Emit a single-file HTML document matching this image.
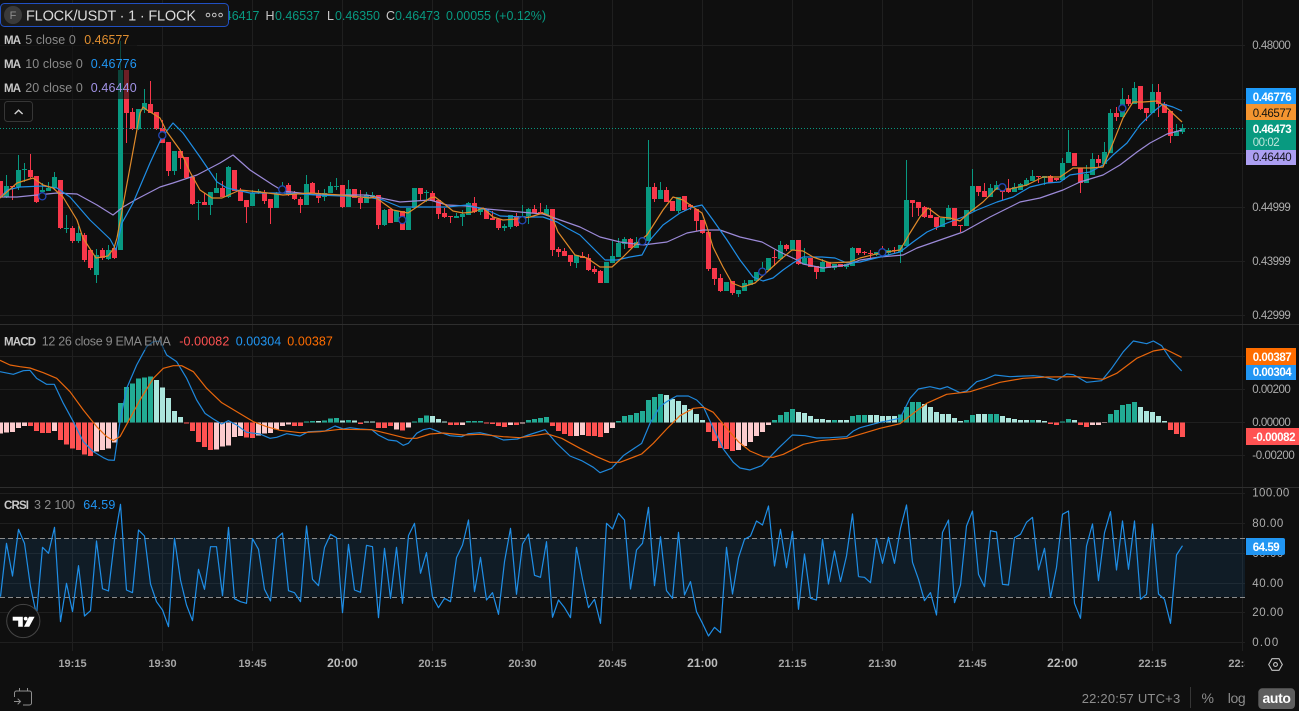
<!DOCTYPE html>
<html><head><meta charset="utf-8"><title>FLOCK/USDT</title>
<style>
html,body{margin:0;padding:0;background:#0f0f0f;width:1299px;height:711px;overflow:hidden}
svg{display:block;font-family:"Liberation Sans",sans-serif}
.p{font-size:11.5px;fill:#adadad}
.t{font-size:11px;font-weight:700;fill:#a6a6a6;text-anchor:middle}
.h{font-size:12px;font-weight:700;fill:#bcbcbc;text-anchor:middle}
.g{fill:#089981;font-size:12.5px}
.m{fill:#c8c8c8;font-size:12.5px}
.b{font-size:11.5px;font-weight:700;fill:#c8c8c8}
.s{font-size:12.5px;fill:#8a8a8a}
</style></head><body>
<svg width="1299" height="711" viewBox="0 0 1299 711" xmlns="http://www.w3.org/2000/svg">
<defs><clipPath id="tc"><rect x="0" y="650" width="1245" height="30"/></clipPath></defs>
<rect width="1299" height="711" fill="#0f0f0f"/>
<!-- grid -->
<path stroke="#1f1f1f" stroke-width="1" fill="none" d="M72.5 0V651M162.5 0V651M252.5 0V651M342.5 0V651M432.5 0V651M522.5 0V651M612.5 0V651M702.5 0V651M792.5 0V651M882.5 0V651M972.5 0V651M1062.5 0V651M1152.5 0V651M1242.5 0V651
M0 45.5H1245M0 99.5H1245M0 153.5H1245M0 207.5H1245M0 261.5H1245M0 315.5H1245
M0 356.5H1245M0 389.5H1245M0 422.5H1245M0 455.5H1245
M0 493.5H1245M0 523.5H1245M0 553.5H1245M0 583.5H1245M0 612.5H1245M0 642.5H1245"/>
<path stroke="#2e2e2e" stroke-width="1" d="M0 324.5H1299M0 487.5H1299"/>
<!-- candles -->
<g fill="none" shape-rendering="crispEdges">
<path stroke="#089981" stroke-width="1" d="M6.5 175V198M18.5 155V190M24.5 163V182M42.5 183V192M48.5 182V191M54.5 172V190M66.5 215V233M78.5 226V243M96.5 249V283M108.5 245V260M120.5 41V250M138.5 109V130M144.5 89V113M174.5 151V175M198.5 200V220M210.5 192V215M216.5 173V193M228.5 166V198M252.5 190V206M258.5 189V194M276.5 192V208M282.5 182V190M306.5 175V205M324.5 189V201M330.5 182V193M336.5 178V190M348.5 180V207M366.5 192V203M372.5 192V197M384.5 209V226M396.5 211V222M408.5 208V230M414.5 188V208M426.5 190V202
M456.5 213V218M462.5 210V226M468.5 202V215M480.5 208V215M504.5 224V231M510.5 215V229M522.5 205V217M528.5 208V224M546.5 205V215M576.5 255V268M606.5 262V283M612.5 241V263M618.5 238V257M624.5 237V249M636.5 237V248M642.5 237V245M648.5 140V241M660.5 182V199M678.5 197V213M726.5 282V291M738.5 290V297M744.5 280V291M750.5 280V285M756.5 272V281M762.5 262V275M768.5 258V270M780.5 241V259M792.5 240V250M804.5 248V264M822.5 259V272M834.5 264V270M846.5 264V269M852.5 247V266
M876.5 252V256M888.5 248V255M900.5 245V263M906.5 160V246M942.5 218V227M948.5 205V220M966.5 210V226M972.5 169V211M990.5 184V197M996.5 181V190M1014.5 183V192M1020.5 183V190M1026.5 178V186M1032.5 170V181M1044.5 176V185M1062.5 158V180M1068.5 130V163M1086.5 165V183M1092.5 153V175M1104.5 142V164M1110.5 109V153M1122.5 88V117M1134.5 82V104M1152.5 84V113M1176.5 124V136M1182.5 124V134"/>
<path stroke="#089981" stroke-width="5" d="M6.5 186V197M18.5 170V187M24.5 169V170M42.5 190V192M48.5 188V191M54.5 177V188M66.5 228V229M78.5 233V241M96.5 255V275M108.5 250V259M120.5 70V250M138.5 109V129M144.5 103V110M174.5 151V171M198.5 202V203M210.5 192V205M216.5 188V193M228.5 167V197M252.5 193V206M258.5 191V192M276.5 194V208M282.5 189V190M306.5 184V205M324.5 193V197M330.5 186V193M336.5 186V187M348.5 189V207M366.5 195V203M372.5 195V197M384.5 210V225M396.5 211V222M408.5 208V230M414.5 188V208M426.5 192V193
M456.5 216V218M462.5 214V217M468.5 203V215M480.5 208V212M504.5 226V228M510.5 215V227M522.5 216V217M528.5 209V216M546.5 209V215M576.5 255V263M606.5 262V283M612.5 256V263M618.5 243V257M624.5 239V244M636.5 242V248M642.5 241V243M648.5 187V241M660.5 190V199M678.5 197V211M726.5 282V291M738.5 290V294M744.5 283V291M750.5 280V285M756.5 272V281M762.5 268V273M768.5 258V270M780.5 245V259M792.5 240V250M804.5 258V264M822.5 262V272M834.5 264V268M846.5 264V267M852.5 248V266
M876.5 252V255M888.5 250V253M900.5 245V252M906.5 200V246M942.5 218V227M948.5 208V220M966.5 210V226M972.5 186V211M990.5 188V197M996.5 185V190M1014.5 187V192M1020.5 184V190M1026.5 180V185M1032.5 176V181M1044.5 176V178M1062.5 163V180M1068.5 152V163M1086.5 174V183M1092.5 159V175M1104.5 152V164M1110.5 113V153M1122.5 99V117M1134.5 88V104M1152.5 92V113M1176.5 131V136M1182.5 128V132"/>
<path stroke="#f7374a" stroke-width="1" d="M.5 181V197M12.5 186V200M30.5 154V178M36.5 176V203M60.5 180V229M72.5 226V243M84.5 233V262M90.5 250V270M102.5 248V260M114.5 246V259M126.5 70V143M132.5 108V130M150.5 81V113M156.5 112V130M162.5 120V143M168.5 142V176M180.5 151V169M186.5 157V178M192.5 177V205M204.5 193V205M222.5 181V197M234.5 170V191M240.5 188V201M246.5 200V223M264.5 190V204M270.5 199V224M288.5 183V196M294.5 191V200M300.5 197V213M312.5 182V193M318.5 190V203M342.5 185V208M354.5 189V198M360.5 190V209M378.5 195V229M390.5 209V223M402.5 211V230M420.5 188V200
M432.5 191V201M438.5 200V219M444.5 208V218M450.5 216V223M474.5 197V213M486.5 209V219M492.5 211V220M498.5 219V230M516.5 213V227M534.5 205V213M540.5 203V214M552.5 209V256M558.5 247V257M564.5 248V256M570.5 255V266M582.5 252V258M588.5 254V271M594.5 266V274M600.5 270V283M630.5 238V248M654.5 183V202M666.5 187V202M672.5 201V211M684.5 196V211M690.5 204V210M696.5 209V231M702.5 220V234M708.5 232V271M714.5 268V285M720.5 274V292M732.5 281V295M774.5 250V266M786.5 244V251M798.5 240V265M810.5 258V267M816.5 266V279M828.5 262V268M840.5 264V267M858.5 248V255
M864.5 251V255M870.5 250V258M882.5 246V255M894.5 247V253M912.5 200V217M918.5 202V216M924.5 206V218M930.5 208V218M936.5 217V230M954.5 208V226M960.5 225V232M978.5 186V196M984.5 183V197M1002.5 187V200M1008.5 179V193M1038.5 176V183M1050.5 175V183M1056.5 178V181M1074.5 153V166M1080.5 168V193M1098.5 155V167M1116.5 107V121M1128.5 95V106M1140.5 86V110M1146.5 108V121M1158.5 84V117M1164.5 102V113M1170.5 111V143"/>
<path stroke="#f7374a" stroke-width="5" d="M.5 181V197M12.5 186V187M30.5 170V177M36.5 176V202M60.5 180V228M72.5 228V241M84.5 235V260M90.5 250V268M102.5 250V258M114.5 248V258M126.5 70V113M132.5 112V129M150.5 104V113M156.5 112V129M162.5 128V143M168.5 142V171M180.5 151V158M186.5 157V178M192.5 177V204M204.5 202V205M222.5 188V197M234.5 170V191M240.5 190V201M246.5 200V207M264.5 193V201M270.5 199V208M288.5 185V195M294.5 194V199M300.5 199V205M312.5 183V193M318.5 193V198M342.5 185V207M354.5 189V198M360.5 198V203M378.5 195V225M390.5 209V223M402.5 211V230M420.5 188V194
M432.5 193V201M438.5 200V214M444.5 213V217M450.5 216V217M474.5 203V212M486.5 209V219M492.5 218V220M498.5 219V228M516.5 216V226M534.5 209V213M540.5 212V214M552.5 209V250M558.5 249V252M564.5 251V256M570.5 255V262M582.5 256V258M588.5 258V270M594.5 269V272M600.5 271V283M630.5 239V248M654.5 187V199M666.5 190V202M672.5 201V211M684.5 196V210M690.5 205V207M696.5 209V221M702.5 220V233M708.5 232V269M714.5 268V279M720.5 278V291M732.5 281V293M774.5 257V258M786.5 245V249M798.5 240V264M810.5 258V267M816.5 266V272M828.5 262V268M840.5 264V267M858.5 248V253
M864.5 252V253M870.5 253V254M882.5 252V254M894.5 250V251M912.5 200V203M918.5 202V208M924.5 207V217M930.5 215V218M936.5 217V227M954.5 208V226M960.5 225V226M978.5 186V192M984.5 191V197M1002.5 187V192M1008.5 189V192M1038.5 176V177M1050.5 176V183M1056.5 178V180M1074.5 153V166M1080.5 168V183M1098.5 159V163M1116.5 113V117M1128.5 99V104M1140.5 86V109M1146.5 108V113M1158.5 92V104M1164.5 104V113M1170.5 111V136"/>
</g>
<!-- MAs -->
<g fill="none" stroke-width="1.2" stroke-linejoin="round">
<polyline stroke="#9c8ad8" points="0,197 17,197 37,195 57,193 77,194 97,205 113,215 123,207 137,199 160,187 173,183 197,175 220,163 233,155 250,170 273,185 283,191 317,195 367,195 400,202 430,200 447,205 467,206 487,209 520,212 543,214 563,221 580,227 600,237 620,242 643,245 667,242 687,233 703,230 720,230 740,237 762,242 780,252 797,260 803,264 823,268 847,265 860,260 880,257 903,255 917,248 940,240 963,232 990,217 1020,202 1040,198 1063,190 1080,182 1103,175 1120,165 1137,152 1150,143 1167,134 1182,130"/>
<polyline stroke="#1f8ee6" points="0,198 7,190 20,187 43,186 57,188 70,197 90,220 110,239 116,250 122,223 133,203 150,163 162,137 173,123 183,133 200,157 217,182 227,188 250,193 283,193 317,195 367,197 383,200 400,207 430,207 447,207 467,205 487,210 500,216 523,217 543,217 557,222 567,228 580,235 593,248 605,260 617,260 630,257 642,255 650,240 663,225 680,213 693,207 702,205 713,220 727,240 740,260 753,277 763,281 773,278 783,270 793,263 803,257 822,257 835,258 847,263 860,262 880,257 900,252 913,242 927,232 947,223 963,217 977,210 997,202 1013,197 1030,187 1047,183 1060,182 1070,175 1090,172 1103,165 1113,155 1127,143 1140,125 1153,112 1163,104 1173,107 1182,111"/>
<polyline stroke="#e08a2a" points="0,198 17,183 33,178 43,185 53,188 63,197 77,220 83,238 96,258 108,256 114,248 117,238 140,113 143,107 147,110 160,118 167,132 180,150 190,172 200,190 212,198 222,198 240,190 260,192 283,195 310,193 340,195 370,198 375,197 393,210 408,213 430,198 435,197 443,203 453,211 463,213 473,212 483,208 493,217 503,220 517,219 530,217 543,213 552,217 558,232 575,255 587,258 600,267 612,267 623,257 637,243 647,235 663,210 673,197 683,200 693,207 702,213 707,227 713,247 723,267 732,283 742,287 755,283 767,272 780,260 792,250 803,251 813,257 830,263 850,262 860,258 880,253 900,250 910,233 920,217 928,208 940,217 950,218 960,221 970,212 983,202 997,188 1010,189 1027,185 1043,177 1060,177 1073,168 1090,168 1103,167 1113,143 1123,118 1133,102 1143,102 1157,101 1167,108 1182,122"/>
</g>
<!-- cross markers -->
<g fill="#0f0f0f" stroke="#2347b5" stroke-width="1.3">
<circle cx="42.3" cy="196.3" r="3.6"/><circle cx="162.3" cy="135.3" r="3.6"/><circle cx="282.3" cy="189.5" r="3.6"/><circle cx="402.3" cy="220" r="3.6"/><circle cx="522.3" cy="220.3" r="3.6"/><circle cx="642.3" cy="241.3" r="3.6"/><circle cx="762.3" cy="271.7" r="3.6"/><circle cx="882.3" cy="252.3" r="3.6"/><circle cx="1002.3" cy="187.3" r="3.6"/><circle cx="1122.3" cy="108.3" r="3.6"/>
</g>
<path d="M0 128.5H1245" stroke="#089981" stroke-width="1" stroke-dasharray="1 2" fill="none"/>
<!-- MACD histogram -->
<g transform="translate(0 325) scale(1 .33333)" fill="none" stroke-width="5" shape-rendering="crispEdges">
<path stroke="#fccbcd" d="M.5 292V326M6.5 292V323M12.5 292V321M18.5 292V309M24.5 292V303M54.5 292V318M96.5 292V380M102.5 292V375M108.5 292V370M114.5 292V353M216.5 292V373M222.5 292V364M228.5 292V361M234.5 292V336M240.5 292V333M258.5 292V332M264.5 292V326M270.5 292V324M276.5 292V314M282.5 292V303M288.5 292V299M396.5 292V314M408.5 292V308M462.5 292V300M510.5 292V300M522.5 292V295M576.5 292V333M582.5 292V330M606.5 292V324M612.5 292V309M738.5 292V375M744.5 292V363M750.5 292V351M756.5 292V333M762.5 292V321M768.5 292V300M1092.5 292V300M1098.5 292V300M1104.5 292V294"/>
<path stroke="#ff5252" d="M30.5 292V303M36.5 292V318M42.5 292V324M48.5 292V324M60.5 292V345M66.5 292V358M72.5 292V371M78.5 292V375M84.5 292V388M90.5 292V393M186.5 292V295M192.5 292V318M198.5 292V351M204.5 292V366M210.5 292V375M246.5 292V338M252.5 292V339M294.5 292V303M300.5 292V303M360.5 292V297M378.5 292V309M384.5 292V309M390.5 292V303M402.5 292V317M450.5 292V300M456.5 292V300M486.5 292V295M492.5 292V297M498.5 292V303M504.5 292V306M516.5 292V300M552.5 292V303M558.5 292V318M564.5 292V327M570.5 292V333M588.5 292V333M594.5 292V333M600.5 292V336M708.5 292V321M714.5 292V348M720.5 292V369M726.5 292V372M732.5 292V378M1050.5 292V297M1056.5 292V300M1080.5 292V300M1086.5 292V306M1170.5 292V315M1176.5 292V327M1182.5 292V336"/>
<path stroke="#ace5dc" d="M156.5 292V165M162.5 292V188M168.5 292V219M174.5 292V258M180.5 292V276M318.5 292V288M342.5 292V287M354.5 292V287M366.5 292V290M372.5 292V290M432.5 292V273M438.5 292V282M444.5 292V290M666.5 292V210M672.5 292V222M678.5 292V228M684.5 292V240M690.5 292V252M696.5 292V267M702.5 292V285M798.5 292V261M804.5 292V264M810.5 292V273M816.5 292V282M822.5 292V282M828.5 292V285M840.5 292V285M846.5 292V285M870.5 292V270M876.5 292V270M882.5 292V273M888.5 292V273M894.5 292V273M924.5 292V237M930.5 292V246M936.5 292V261M942.5 292V267M948.5 292V267M954.5 292V279M960.5 292V288M978.5 292V267M984.5 292V267M1002.5 292V273M1008.5 292V279M1014.5 292V282M1020.5 292V285M1026.5 292V285M1038.5 292V285M1044.5 292V288M1074.5 292V285M1140.5 292V246M1146.5 292V258M1152.5 292V261M1158.5 292V273M1164.5 292V288"/>
<path stroke="#22ab94" d="M120.5 292V234M126.5 292V186M132.5 292V175M138.5 292V160M144.5 292V157M150.5 292V155M306.5 292V289M312.5 292V288M324.5 292V287M330.5 292V281M336.5 292V279M348.5 292V285M414.5 292V289M420.5 292V279M426.5 292V272M468.5 292V288M474.5 292V288M480.5 292V288M528.5 292V285M534.5 292V282M540.5 292V279M546.5 292V276M618.5 292V288M624.5 292V273M630.5 292V270M636.5 292V264M642.5 292V258M648.5 292V225M654.5 292V216M660.5 292V207M774.5 292V285M780.5 292V270M786.5 292V261M792.5 292V252M834.5 292V285M852.5 292V273M858.5 292V270M864.5 292V270M900.5 292V268M906.5 292V246M912.5 292V231M918.5 292V231M966.5 292V285M972.5 292V270M990.5 292V267M996.5 292V267M1032.5 292V285M1062.5 292V289M1068.5 292V282M1110.5 292V267M1116.5 292V255M1122.5 292V240M1128.5 292V237M1134.5 292V231"/>
</g>
<!-- MACD lines -->
<g fill="none" stroke-width="3.6" stroke-linejoin="round">
<g transform="translate(0 325) scale(.33333)">
<polyline stroke="#1f88dc" points="0,140 40,148 70,137 90,136 110,160 140,178 163,178 190,235 220,290 250,350 280,380 310,398 325,405 343,406 360,290 380,190 410,120 440,65 460,50 480,48 500,90 530,110 560,160 590,225 615,265 640,282 665,297 685,287 710,300 740,322 780,327 810,340 830,337 860,326 900,333 925,320 975,318 1005,303 1030,312 1050,308 1080,312 1115,314 1135,330 1165,345 1190,348 1210,361 1225,355 1250,325 1270,314 1290,310"/>
<polyline stroke="#e8660c" points="0,106 30,120 60,125 90,129 130,143 170,160 210,200 250,255 290,305 320,335 340,347 360,335 390,280 420,225 460,160 490,130 520,122 545,122 580,140 620,190 665,233 710,260 760,290 800,305 840,316 900,323 960,320 1020,313 1115,314 1160,325 1220,340 1250,340 1290,327"/>
</g>
<g transform="translate(430 325) scale(.33333)">
<polyline stroke="#1f88dc" points="0,310 30,322 60,332 95,335 115,326 150,323 185,331 220,345 262,342 295,330 345,314 380,355 420,393 455,407 490,427 510,443 545,430 580,392 635,355 660,295 690,245 710,230 740,213 775,213 800,225 820,245 850,310 880,372 910,412 930,429 960,435 995,422 1045,370 1087,330 1125,332 1160,339 1200,338 1250,335 1270,318 1290,308"/>
<polyline stroke="#e8660c" points="0,327 40,324 100,330 150,328 220,335 270,338 350,326 395,340 450,370 500,395 540,412 570,412 635,387 670,355 710,312 750,272 790,250 820,247 850,262 890,310 925,350 960,378 1000,395 1030,397 1060,388 1120,358 1170,347 1250,340 1290,328"/>
</g>
<g transform="translate(860 325) scale(.33333)">
<polyline stroke="#1f88dc" points="0,308 60,292 120,280 150,220 175,192 210,185 240,192 262,185 300,203 320,198 350,170 375,163 405,150 450,155 520,152 550,155 590,166 620,147 640,149 680,172 725,167 755,130 790,80 820,48 860,56 880,48 905,62 930,100 965,138"/>
<polyline stroke="#e8660c" points="0,328 60,310 120,296 160,265 200,235 260,208 330,200 420,172 490,160 560,156 650,155 730,163 770,145 830,100 880,78 915,72 965,97"/>
</g>
</g>
<!-- CRSI -->
<rect x="0" y="538" width="1245" height="59" fill="#2196f3" fill-opacity=".1"/>
<path d="M0 538.5H1245M0 597.5H1245" stroke="#8c8c8c" stroke-width="1" stroke-dasharray="5 3" fill="none"/>
<g fill="none" stroke="#1f8ee6" stroke-width="3.6" stroke-linejoin="round">
<polyline transform="translate(0 490) scale(.33333)" points="1.5,320 19.5,160 37.5,258 55.5,118 73.5,160 91.5,290 109.5,375 127.5,172 145.5,190 163.5,112 181.5,395 199.5,280 217.5,365 235.5,227 253.5,378 271.5,362 289.5,153 307.5,296 325.5,303 343.5,150 361.5,43 379.5,300 397.5,308 415.5,120 433.5,138 451.5,282 469.5,335 487.5,360 505.5,410 523.5,145 541.5,270 559.5,345 577.5,392 595.5,238 613.5,298 631.5,170 649.5,170 667.5,317 685.5,112 703.5,326 721.5,335 739.5,340 757.5,146 775.5,178 793.5,298 811.5,333 829.5,145 847.5,129 865.5,302 883.5,308 901.5,335 919.5,108 937.5,268 955.5,287 973.5,173 991.5,133 1009.5,143 1027.5,368 1045.5,163 1063.5,300 1081.5,307 1099.5,166 1117.5,170 1135.5,383 1153.5,175 1171.5,325 1189.5,172 1207.5,340 1225.5,137 1243.5,100 1261.5,250 1279.5,188 1297.5,320"/>
<polyline transform="translate(430 490) scale(.33333)" points="7.5,320 25.5,353 43.5,325 61.5,335 79.5,203 97.5,165 115.5,90 133.5,305 151.5,202 169.5,330 187.5,308 205.5,373 223.5,215 241.5,115 259.5,313 277.5,162 295.5,132 313.5,256 331.5,262 349.5,155 367.5,382 385.5,330 403.5,353 421.5,383 439.5,172 457.5,268 475.5,353 493.5,328 511.5,400 529.5,100 547.5,117 565.5,70 583.5,90 601.5,297 619.5,180 637.5,160 655.5,52 673.5,287 691.5,140 709.5,302 727.5,325 745.5,127 763.5,315 781.5,275 799.5,365 817.5,400 835.5,438 853.5,412 871.5,428 889.5,172 907.5,312 925.5,203 943.5,148 961.5,138 979.5,93 997.5,105 1015.5,48 1033.5,228 1051.5,118 1069.5,233 1087.5,124 1105.5,358 1123.5,192 1141.5,325 1159.5,330 1177.5,148 1195.5,282 1213.5,183 1231.5,275 1249.5,198 1267.5,72 1285.5,260"/>
<polyline transform="translate(860 490) scale(.33333)" points="-4.5,260 13.5,262 31.5,278 49.5,145 67.5,220 85.5,142 103.5,220 121.5,115 139.5,45 157.5,217 175.5,268 193.5,332 211.5,308 229.5,375 247.5,127 265.5,90 283.5,338 301.5,285 319.5,108 337.5,63 355.5,253 373.5,290 391.5,122 409.5,126 427.5,283 445.5,285 463.5,143 481.5,133 499.5,97 517.5,82 535.5,240 553.5,175 571.5,322 589.5,232 607.5,73 625.5,63 643.5,340 661.5,385 679.5,168 697.5,102 715.5,272 733.5,128 751.5,65 769.5,240 787.5,93 805.5,238 823.5,93 841.5,328 859.5,313 877.5,102 895.5,312 913.5,328 931.5,400 949.5,195 967.5,167"/>
</g>
<!-- Legend backdrops -->
<rect x="0" y="28" width="137" height="71" fill="#0f0f0f" fill-opacity=".6"/>
<rect x="0" y="333" width="334" height="17" fill="#0f0f0f" fill-opacity=".5"/>
<!-- OHLC -->
<text class="g" x="259.5" y="20" text-anchor="end">0.46417</text>
<text class="m" x="265.5" y="20">H</text><text class="g" x="275" y="20" textLength="45">0.46537</text>
<text class="m" x="327" y="20">L</text><text class="g" x="335" y="20" textLength="45">0.46350</text>
<text class="m" x="386" y="20">C</text><text class="g" x="395" y="20" textLength="45">0.46473</text>
<text class="g" x="446" y="20" textLength="45">0.00055</text>
<text class="g" x="495" y="20" textLength="51">(+0.12%)</text>
<!-- Title pill -->
<rect x=".5" y="3.5" width="228" height="23" rx="4" fill="#1a1a1a" stroke="#2150c2"/>
<circle cx="13" cy="15" r="9" fill="#3a3a3a"/>
<text x="13" y="19" font-size="11" fill="#8e8e8e" text-anchor="middle">F</text>
<text x="26" y="20.5" font-size="14.5" fill="#dcdcdc" textLength="170">FLOCK/USDT · 1 · FLOCK</text>
<g fill="none" stroke="#c4c4c4" stroke-width="1"><circle cx="208" cy="15" r="1.8"/><circle cx="214.3" cy="15" r="1.8"/><circle cx="220.6" cy="15" r="1.8"/></g>
<!-- MA legends -->
<text class="b" x="4" y="44" textLength="17">MA</text><text class="s" x="25.3" y="44" textLength="50.5">5 close 0</text><text x="84.3" y="44" font-size="12.5" fill="#e08e30" textLength="45">0.46577</text>
<text class="b" x="4" y="68" textLength="17">MA</text><text class="s" x="25.3" y="68" textLength="57.5">10 close 0</text><text x="90.7" y="68" font-size="12.5" fill="#2196f3" textLength="46">0.46776</text>
<text class="b" x="4" y="92" textLength="17">MA</text><text class="s" x="25.3" y="92" textLength="57.5">20 close 0</text><text x="90.7" y="92" font-size="12.5" fill="#a193e6" textLength="46">0.46440</text>
<rect x="4.5" y="101.5" width="28" height="20" rx="3" fill="#0f0f0f" stroke="#363636"/>
<path d="M14.7 114L18.6 110.2L22.6 114" fill="none" stroke="#d0d0d0" stroke-width="1.4"/>
<!-- MACD legend -->
<text class="b" x="4" y="345.7" textLength="32">MACD</text>
<text class="s" x="41.7" y="345.7" textLength="129">12 26 close 9 EMA EMA</text>
<text x="179.3" y="345.7" font-size="12.5" fill="#ff5252" textLength="50">-0.00082</text>
<text x="235.7" y="345.7" font-size="12.5" fill="#2196f3" textLength="45.5">0.00304</text>
<text x="287.3" y="345.7" font-size="12.5" fill="#ff6d00" textLength="45.5">0.00387</text>
<!-- CRSI legend -->
<text class="b" x="4" y="509" textLength="25">CRSI</text>
<text class="s" x="34" y="509" textLength="41">3 2 100</text>
<text x="83.3" y="509" font-size="12.5" fill="#2196f3" textLength="32">64.59</text>
<!-- TV logo -->
<circle cx="23.3" cy="621" r="16.6" fill="#0f0f0f" stroke="#454545" stroke-width="1"/>
<path d="M12.7 616.7H22.8V626.7H18.2V620.6H12.7Z" fill="#fff"/>
<circle cx="25.7" cy="618.6" r="1.9" fill="#fff"/>
<path d="M29 616.7H34.6L29.2 626.7H24Z" fill="#fff"/>
<!-- Price scale -->
<text class="p" x="1252.3" y="49" textLength="38.5">0.48000</text>
<text class="p" x="1252.3" y="211" textLength="38.5">0.44999</text>
<text class="p" x="1252.3" y="265" textLength="38.5">0.43999</text>
<text class="p" x="1252.3" y="319" textLength="38.5">0.42999</text>
<rect x="1246" y="88" width="50" height="16" fill="#1e9bfa"/>
<rect x="1246" y="104" width="50" height="16" fill="#f49530"/>
<rect x="1246" y="120" width="50" height="30" fill="#089a80"/>
<rect x="1246" y="150" width="50" height="15" fill="#ac9ff2"/>
<text x="1252.7" y="101" font-size="11.5" font-weight="700" fill="#fff" textLength="39">0.46776</text>
<text x="1252.7" y="117" font-size="11.5" fill="#14140f" textLength="39">0.46577</text>
<text x="1252.7" y="133" font-size="11.5" font-weight="700" fill="#fff" textLength="39">0.46473</text>
<text x="1252.7" y="146" font-size="11.5" fill="#bfe6dc" textLength="27">00:02</text>
<text x="1252.7" y="161" font-size="11.5" fill="#14141e" textLength="39">0.46440</text>
<!-- MACD scale -->
<text class="p" x="1252.3" y="393" textLength="38.5">0.00200</text>
<text class="p" x="1252.3" y="426" textLength="38.5">0.00000</text>
<text class="p" x="1252.3" y="459" textLength="42.5">-0.00200</text>
<rect x="1246" y="348" width="50" height="17" fill="#ff6d00"/>
<rect x="1246" y="365" width="50" height="15" fill="#2196f3"/>
<rect x="1246" y="428" width="53" height="17" fill="#ff5252"/>
<text x="1252.7" y="361" font-size="11.5" font-weight="700" fill="#fff" textLength="39">0.00387</text>
<text x="1252.7" y="376" font-size="11.5" font-weight="700" fill="#fff" textLength="39">0.00304</text>
<text x="1253" y="441" font-size="11.5" font-weight="700" fill="#fff" textLength="42.5">-0.00082</text>
<!-- CRSI scale -->
<text class="p" x="1252.3" y="496.5" textLength="37">100.00</text>
<text class="p" x="1252.3" y="527" textLength="31">80.00</text>
<text class="p" x="1252.3" y="557" textLength="31">60.00</text>
<text class="p" x="1252.3" y="587" textLength="31">40.00</text>
<text class="p" x="1252.3" y="616" textLength="31">20.00</text>
<text class="p" x="1252.3" y="646" textLength="26">0.00</text>
<path d="M1246 538H1283a2 2 0 0 1 2 2V553a2 2 0 0 1-2 2H1246Z" fill="#2196f3"/>
<text x="1252.7" y="551" font-size="11.5" font-weight="700" fill="#fff" textLength="27">64.59</text>
<!-- Time axis -->
<g clip-path="url(#tc)">
<text class="t" x="72.5" y="667">19:15</text><text class="t" x="162.5" y="667">19:30</text><text class="t" x="252.5" y="667">19:45</text><text class="h" x="342.5" y="667">20:00</text><text class="t" x="432.5" y="667">20:15</text><text class="t" x="522.5" y="667">20:30</text><text class="t" x="612.5" y="667">20:45</text><text class="h" x="702.5" y="667">21:00</text><text class="t" x="792.5" y="667">21:15</text><text class="t" x="882.5" y="667">21:30</text><text class="t" x="972.5" y="667">21:45</text><text class="h" x="1062.5" y="667">22:00</text><text class="t" x="1152.5" y="667">22:15</text><text class="t" x="1242.5" y="667">22:30</text>
</g>
<!-- Gear -->
<path d="M1268.7 664.5L1272 658.7H1279L1282.3 664.5L1279 670.3H1272Z" fill="none" stroke="#c4c4c4" stroke-width="1.1"/>
<circle cx="1275.5" cy="664.5" r="1.9" fill="none" stroke="#c4c4c4" stroke-width="1.1"/>
<!-- Calendar icon -->
<path d="M14.5 697V693a2 2 0 0 1 2-2H29.5a2 2 0 0 1 2 2V703a2 2 0 0 1-2 2H23M19.5 688V691M27.5 688V691M14 701.5H20.5M17.7 698.7L20.5 701.5L17.7 704.3" fill="none" stroke="#8f8f8f" stroke-width="1"/>
<!-- Bottom bar -->
<text x="1081.7" y="703" font-size="13" fill="#8d8d8d" textLength="98.5">22:20:57 UTC+3</text>
<path d="M1190.5 687V708" stroke="#363636"/>
<text x="1201.5" y="703" font-size="14" fill="#8d8d8d" textLength="12.5">%</text>
<text x="1227.7" y="703" font-size="14" fill="#8d8d8d" textLength="18">log</text>
<rect x="1258.3" y="688.3" width="36.7" height="20.7" rx="4" fill="#5e5e5e"/>
<text x="1276.7" y="703" font-size="14" font-weight="700" fill="#fff" text-anchor="middle" textLength="28.5">auto</text>
</svg>
</body></html>
